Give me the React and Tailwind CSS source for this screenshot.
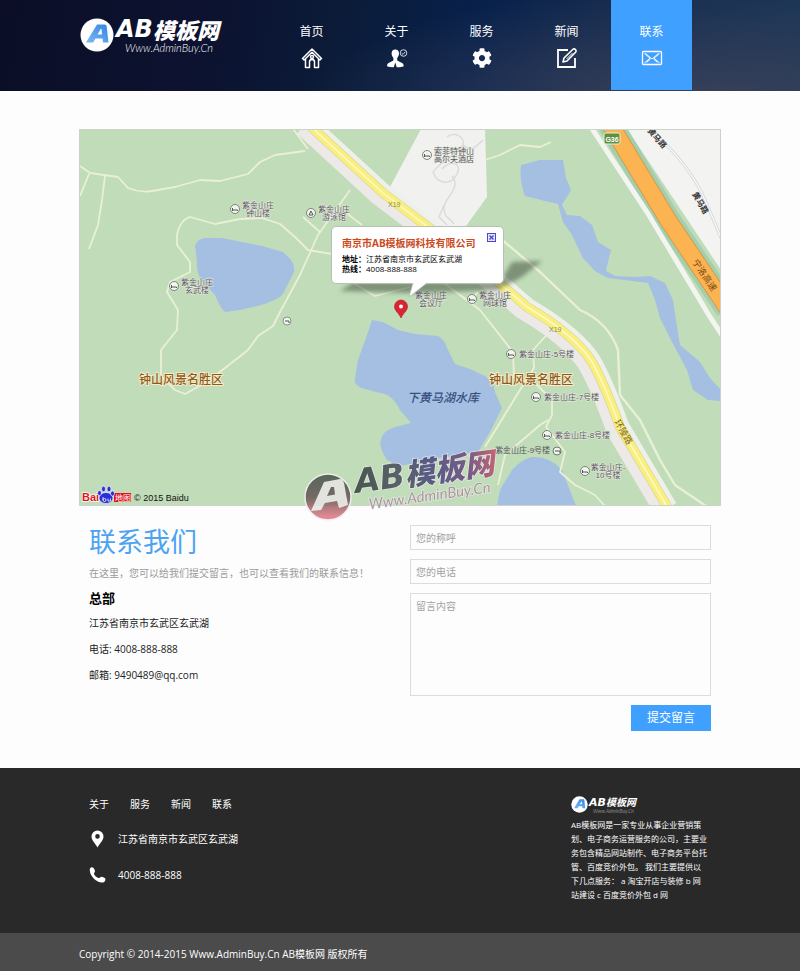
import React from "react";
import { FaCog } from "react-icons/fa";

const HomeIcon = () => (
  <svg viewBox="0 0 22 22" className="h-[22px] w-[22px]" fill="none" stroke="currentColor" strokeWidth="1.500" strokeLinejoin="round">
    <path d="M1.500 11.500 11 2l9.500 9.500-1.600 1.500L11 5.200 3.100 13z" />
    <path d="M4.500 12v8.500h4V15a2.500 2.500 0 0 1 5 0v5.500h4V12" />
    <circle cx="11" cy="10" r="1.500" />
  </svg>
);

const UserIcon = () => (
  <svg viewBox="0 0 22 22" className="h-[22px] w-[22px]" fill="currentColor">
    <path d="M9.300 2.500c2.400 0 3.700 1.600 3.700 4 0 2-.9 3.400-1.800 4.500v2.500l4.800 2.500c1.200.6 1.700 1.600 1.700 3.300-2 .8-4.500 1-7 .9L9.300 15.500l-1.500 4.700c-2.500.1-4.800-.1-6.800-.9 0-1.700.5-2.700 1.700-3.300l4.700-2.500V11C6.500 9.900 5.600 8.500 5.600 6.500c0-2.400 1.300-4 3.700-4z" />
    <circle cx="17.500" cy="6" r="3.300" fill="none" stroke="currentColor" strokeWidth=".8" />
    <path d="m15.700 6.200 1.300 1.200L19.200 4.800" fill="none" stroke="currentColor" strokeWidth=".8" />
  </svg>
);

const EditIcon = () => (
  <svg viewBox="0 0 22 22" className="h-[22px] w-[22px]" fill="none" stroke="currentColor" strokeWidth="1.800">
    <path d="M12 3H2v17h17V11" />
    <path d="M7 15 8 11l9-8.800c1.800-1 3.800 1 2.800 2.800L11 14z" strokeWidth="1.600" strokeLinejoin="round" />
    <path d="m10.500 12 6-6" strokeWidth="1" />
  </svg>
);

const MailIcon = () => (
  <svg viewBox="0 0 22 22" className="h-[22px] w-[22px]" fill="none" stroke="currentColor" strokeWidth="1.300">
    <rect x="1.500" y="4.500" width="19" height="13" rx="1" />
    <path d="m3.500 6.500 5.500 4.700L3.500 15.800M18.500 6.500 13 11.200l5.500 4.600M4.500 6.500 11 12l6.500-5.500M5.500 15.500l4-3.500M16.500 15.500l-4-3.500" strokeWidth="1" />
  </svg>
);

const PinIcon = () => (
  <svg viewBox="0 0 18 20" className="h-[20px] w-[18px]" fill="currentColor" aria-hidden="true">
    <path fillRule="evenodd" d="M8.500 1.500a6 6 0 0 1 6 6c0 4-4 7-6 11-2-4-6-7-6-11a6 6 0 0 1 6-6zm0 3.600a2.300 2.300 0 1 0 0 4.600 2.300 2.300 0 0 0 0-4.600z" />
  </svg>
);

const PhoneIcon = () => (
  <svg viewBox="0 0 18 20" className="h-[20px] w-[18px]" fill="currentColor" aria-hidden="true">
    <path d="M1 3.500C1.800 2 3.500 1.800 4.500 3c.8 1 1.500 2.300 1.500 3.200 0 .9-1 1.400-1 2.200 0 1.600 3.200 4.600 5 4.600 1 0 1.200-1.300 2.300-1.300 1.200 0 3 .8 3.700 1.600.8 1 .3 2.900-1.300 3.900C9.500 19.500-.8 10.500 1 3.500z" />
  </svg>
);

const NAV = [
  { label: "首页", icon: <HomeIcon /> },
  { label: "关于", icon: <UserIcon /> },
  { label: "服务", icon: <FaCog className="h-[20px] w-[20px]" /> },
  { label: "新闻", icon: <EditIcon /> },
  { label: "联系", icon: <MailIcon />, active: true },
];

function LogoMark({ className }) {
  return (
    <svg viewBox="0 0 34 34" className={className} aria-hidden="true">
      <defs>
        <linearGradient id="mark" x1="0" y1="1" x2="1" y2="0">
          <stop offset="0" stopColor="#7db9f5" />
          <stop offset="1" stopColor="#2f86e6" />
        </linearGradient>
      </defs>
      <circle cx="17" cy="17" r="16.500" fill="#fff" />
      <path fillRule="evenodd" fill="url(#mark)" d="M6 24.500 17 6.500h7.500c1.500 0 2 .8 2.200 2l1.800 16h-5.500l-.5-4h-7l-2.400 4zM17.500 16.500h4.500l-.5-5.500h-.8z" />
    </svg>
  );
}

function Header() {
  return (
    <header className="h-[91px] bg-[radial-gradient(ellipse_50%_130%_at_88%_115%,#39415a_0%,#39415a00_100%),linear-gradient(100deg,#0b0e26_0%,#0c1230_25%,#0b1b38_42%,#08214c_60%,#12294e_74%,#1b3656_100%)]">
      <div className="mx-auto flex max-w-[642px] justify-between">
        <a href="#" className="flex items-start pt-[18px] pl-px text-white">
          <LogoMark className="h-[34px] w-[34px]" />
          <span className="-mt-[3px] ml-[2px] flex flex-col italic">
            <span className="flex items-center leading-[28px] font-bold whitespace-nowrap">
              <span className="font-['DejaVu_Sans',sans-serif] text-[24px]">AB</span>
              <span className="font-['Noto_Sans_CJK_SC',sans-serif] text-[22px] font-black">模板网</span>
            </span>
            <span className="pl-[9px] font-['Lato',sans-serif] text-[11px] leading-[10px] font-light">Www.AdminBuy.Cn</span>
          </span>
        </a>
        <nav className="mr-[29px] flex gap-1">
          {NAV.map((item) => (
            <a
              key={item.label}
              href="#"
              className={
                item.active
                  ? "flex h-[90px] w-[81px] flex-col items-center bg-[#40a0ff] pt-[22px] text-white"
                  : "flex h-[90px] w-[81px] flex-col items-center pt-[22px] text-white"
              }
            >
              <span className="text-[12px] leading-[20px]">{item.label}</span>
              <span className="mt-[4px] flex h-[24px] items-center">{item.icon}</span>
            </a>
          ))}
        </nav>
      </div>
    </header>
  );
}

const POIS = [
  { x: 235, y: 209, lines: ["紫金山庄", "钟山楼"] },
  { x: 174, y: 286, lines: ["紫金山庄", "玄武楼"] },
  { x: 311, y: 213, lines: ["紫金山庄", "游泳馆"], tri: true },
  { x: 427, y: 155, lines: ["索菲特钟山", "高尔夫酒店"], shift: 4 },
  { x: 408, y: 299, lines: ["紫金山庄", "会议厅"], bare: true },
  { x: 472, y: 299, lines: ["紫金山庄", "网球馆"] },
  { x: 511, y: 354, lines: ["紫金山庄-5号楼"] },
  { x: 536, y: 397, lines: ["紫金山庄-7号楼"] },
  { x: 547, y: 435, lines: ["紫金山庄-8号楼"] },
  { x: 585, y: 471, lines: ["紫金山庄-", "10号楼"] },
];

function Poi({ x, y, lines, tri, bare, shift = 0 }) {
  return (
    <g>
      {!bare && <circle cx={x} cy={y} r="4.500" fill="#f2f5ee" stroke="#6f7a70" strokeWidth=".9" />}
      {!bare && (tri
        ? <path d={`M${x - 2} ${y + 2}h4l-2-4z`} fill="none" stroke="#555" />
        : <path d={`M${x - 2.5} ${y - 1}v3M${x - 2.5} ${y + 1}h5v1`} fill="none" stroke="#555" />)}
      {lines.map((t, i) => (
        <text
          key={t}
          x={lines.length === 1 ? x + 8 : x + 23 + shift}
          y={lines.length === 1 ? y + 3 : y - 1 + i * 8}
          textAnchor={lines.length === 1 ? "start" : "middle"}
          fontSize="8"
          fill="#5a5560"
          stroke="#e6ecdf"
          strokeWidth="1"
          paintOrder="stroke"
        >
          {t}
        </text>
      ))}
    </g>
  );
}

function MapCanvas() {
  const mainRoad = "M308 124 383 193 420 221 475 262 527 307 Q575 335 592 362 Q604 383 620 427 L668 508";
  return (
    <svg viewBox="79 129 642 377" className="block w-full overflow-visible font-['Liberation_Sans','Noto_Sans_CJK_SC',sans-serif]">
      <defs>
        <clipPath id="frame"><rect x="79" y="129" width="642" height="377" /></clipPath>
        <linearGradient id="wmText" x1="0" y1="0" x2="1" y2="0">
          <stop offset="0" stopColor="#35443f" />
          <stop offset=".3" stopColor="#4b4f5c" />
          <stop offset=".55" stopColor="#4c4a80" />
          <stop offset=".8" stopColor="#6d4a80" />
          <stop offset="1" stopColor="#c4566c" />
        </linearGradient>
        <linearGradient id="wmDisc" x1="0" y1="0" x2="0" y2="1">
          <stop offset="0" stopColor="#46564c" />
          <stop offset=".5" stopColor="#6b5a58" />
          <stop offset="1" stopColor="#ee7f88" />
        </linearGradient>
        <filter id="soft"><feGaussianBlur stdDeviation="2" /></filter>
      </defs>
      <g clipPath="url(#frame)">
        <rect x="79" y="129" width="642" height="377" fill="#c1dcb9" />
        <path d="M627 129 721 270V129z" fill="#f3f3f1" />
        <path d="M421 129H485L487 197 466 226H436L390 187z" fill="#f1f2ef" />
        <path d="M447 137c8-6 18 0 16 8s-18 12-30 27c4 12 18 14 24 2s-8-14-15-5M452 176c10 12-8 22-8 32s6 10 10 16M463 145c10 8 14 0 20-5M444 205l-5 12 8 8" fill="none" stroke="#d9d9d9" strokeWidth="1.300" />

        <g fill="#a5bfe3">
          <path d="M195 246Q198 238 206 238L222 238 262 246 283 252Q296 262 294 272L284 292Q280 302 240 310L226 312Q222 312 215 295L201 280Q196 270 197 262z" />
          <path d="M372 320 383 322 398 330 415 334 438 336Q445 340 447 348L455 364 470 369 485 376Q494 382 495 392L502 408 490 432 478 452 440 458 400 466 387 460Q378 446 381 439 384 430 395 427L411 423 400 410Q392 394 380 393L365 389Q353 386 355 378L358 360 367 335z" />
          <path d="M497 506 500 490 512 470Q522 459 532 457 550 456 562 470L576 506z" />
          <path d="M521 165 540 160 563 160 566 178 571 190 562 205 567 215 580 216 592 225 598 242 611 250 608 262 606 271 615 276 635 277 650 276 665 283 673 300 676 320 680 345 700 362 710 378 721 390V401L708 400 693 390 687 370 672 342 660 318 655 300 648 283 632 281 608 278 595 271 583 258 572 235 563 222 558 204 545 201 525 196Q519 180 521 165z" />
        </g>

        <g fill="none" stroke="#eaf0d6" strokeWidth="1.800" strokeLinejoin="round">
          <path d="M80 166 90 173 118 177 128 188Q140 193 152 191L175 187 200 180 220 181 248 174 260 162 275 155 305 151" />
          <path d="M89 174 80 196M105 176 102 200 98 225 89 249" />
          <path d="M332 254 308 250 295 237 280 224 262 218 240 219 215 224 190 217Q180 220 177 235V245L190 262V272L170 282 167 292 178 310 177 330 161 350V376L175 390 185 394 205 383 225 368 248 350 258 336 273 326 280 312 300 275 318 235 350 190" />
          <path d="M303 217 320 232M345 212 362 225M293 129 308 149M340 275 375 296 410 287" />
          <path d="M444 283 480 310 513 352 514 378M470 300 478 292M485 447 520 390 534 368 533 350 553 328" />
          <path d="M498 485 505 455 540 425 548 420M534 382 552 400V415L546 427 565 452 560 472 575 485 595 495 605 506" />
          <path d="M485 160 500 155 520 145 540 147 551 142" />
          <path d="M500 238 540 272 580 310Q608 322 618 350L620 395 640 420 660 460 675 485 706 506" strokeWidth="2.400" />
        </g>

        <path d={mainRoad} transform="translate(-6 4)" fill="none" stroke="#ece9e6" strokeWidth="15" />
        <path d={mainRoad} transform="translate(3 -2)" fill="none" stroke="#eef0ea" strokeWidth="12" />
        <path d={mainRoad} fill="none" stroke="#dcd6a0" strokeWidth="10" />
        <path d={mainRoad} fill="none" stroke="#f9ef7c" strokeWidth="8.500" />
        <path d={mainRoad} fill="none" stroke="#fdf9cc" strokeWidth="1.500" />

        <path d="M610 124 668 220 728 309" fill="none" stroke="#a4cfae" strokeWidth="25" />
        <path d="M610 124 668 220 728 309" fill="none" stroke="#d59a4b" strokeWidth="18" />
        <path d="M610 124 668 220 728 309" fill="none" stroke="#fcb452" strokeWidth="16" />
        <path d="M589 124 647 212 710 317 724 338" fill="none" stroke="#f4f5f0" strokeWidth="5" />
        <path d="M650 129Q690 165 705 200T724 245" fill="none" stroke="#d2d2d2" strokeWidth="3" />
        <path d="M650 129Q690 165 705 200T724 245" fill="none" stroke="#f8f8f8" strokeWidth="1.500" />

        <g fontSize="8" fontWeight="700" fill="#333">
          <text transform="translate(647 131) rotate(48)">黄马路</text>
          <text transform="translate(692 194) rotate(60)">黄马路</text>
        </g>
        <text transform="translate(692 262) rotate(56)" fontSize="9" fill="#7a4a12">宁洛高速</text>
        <text transform="translate(614 422) rotate(60)" fontSize="9" fill="#7d6510">环陵路</text>
        <rect x="604" y="133" width="16" height="11" rx="2" fill="#5f8f3f" stroke="#e4f0d0" />
        <text x="612" y="142" fontSize="7" fontWeight="700" fill="#fff" textAnchor="middle">G36</text>
        <text x="388" y="207" fontSize="7" fill="#8a8a55">X19</text>
        <text x="549" y="332" fontSize="7" fill="#8a8a55">X19</text>

        {POIS.map((p) => <Poi key={p.x} {...p} />)}
        <text x="495" y="453" fontSize="8" fill="#5a5560">紫金山庄-9号楼</text>
        <circle cx="557" cy="451" r="4" fill="#f2f5ee" stroke="#6f7a70" />
        <path d="M555 451h5v2" fill="none" stroke="#555" />
        <circle cx="287" cy="321" r="4" fill="#f2f5ee" stroke="#8a9488" />
        <path d="M285 321h4v2" fill="none" stroke="#555" />

        <g fontSize="12" fontWeight="500" fill="#8d5a1c" stroke="#f8ecc8" strokeWidth="1.800" paintOrder="stroke">
          <text x="139" y="384">钟山风景名胜区</text>
          <text x="489" y="384">钟山风景名胜区</text>
        </g>
        <text x="407" y="402" fontSize="12" fontWeight="500" fontStyle="italic" fill="#35507f">下黄马湖水库</text>

        <path d="M340 291 354 282H500L512 262 542 261 522 277 498 290 415 293z" fill="#3a4a38" opacity=".5" filter="url(#soft)" />
        <path d="M401 318c-2-5-6.500-7-6.500-11.500a6.500 6.500 0 0 1 13 0c0 4.500-4.500 6.500-6.500 11.500z" fill="#dc2430" stroke="#b3141f" strokeWidth=".6" />
        <circle cx="401" cy="306.500" r="2" fill="#fff" />

        <text x="82" y="501" fontSize="11" fontWeight="700" fill="#e1141e" stroke="#fff" strokeWidth="1.500" paintOrder="stroke">Bai</text>
        <rect x="114" y="493" width="17" height="9" fill="#e1141e" />
        <text x="115" y="501" fontSize="8" fill="#fff">地图</text>
        <g fill="#2b2fd8" stroke="#fff" strokeWidth=".6">
          <ellipse cx="106" cy="498" rx="7" ry="5.500" />
          <ellipse cx="99.500" cy="493" rx="2" ry="2.600" />
          <ellipse cx="103.500" cy="489" rx="2" ry="2.800" />
          <ellipse cx="109" cy="489" rx="2" ry="2.800" />
          <ellipse cx="112.500" cy="493.500" rx="2" ry="2.600" />
        </g>
        <path d="M103 497v3a1.500 1.500 0 0 0 3 0 1.500 1.500 0 0 0-3 0M108 498.500v2.500h2.500v-2.500" fill="none" stroke="#fff" strokeWidth=".8" />
        <text x="134" y="501" fontSize="9" fill="#111">© 2015 Baidu</text>
      </g>
      <rect x="79.500" y="129.500" width="641" height="376" fill="none" stroke="#ccd3c8" />

      <g opacity=".88">
        <circle cx="328" cy="497" r="23" fill="url(#wmDisc)" stroke="#f0f0f0" strokeWidth="1.500" />
        <path fillRule="evenodd" fill="#e6e6e2" d="M311 511 324 482 340 479Q343 479 344 483L348 505 339 508 337 501 325 503 321 510zM327 496 335 494.500 334 487H331z" />
        <g transform="translate(356 493) rotate(-8)" stroke="#ecebea" strokeWidth="1.500" paintOrder="stroke" fontStyle="italic">
          <text fontSize="30" fontWeight="900" fill="url(#wmText)">
            <tspan className="font-['DejaVu_Sans',sans-serif]" fontSize="33" fontWeight="700">AB</tspan>
            <tspan>模板网</tspan>
          </text>
          <text x="11" y="18" fontSize="15" fill="#a58f98" className="font-['Lato',sans-serif]">Www.AdminBuy.Cn</text>
        </g>
      </g>
    </svg>
  );
}

function MapSection() {
  return (
    <section className="relative" aria-label="地图">
      <MapCanvas />
      <div className="absolute top-[97px] left-[252px] h-[58px] w-[173px] rounded-[5px] border border-[#b8c0b4] bg-white px-[10px] pt-[9px] text-black">
        <h2 className="text-[10px] leading-[15px] font-bold whitespace-nowrap text-[#cc4a1e]">南京市AB模板网科技有限公司</h2>
        <p className="mt-[3px] text-[8px] leading-[10px] whitespace-nowrap"><b>地址：</b>江苏省南京市玄武区玄武湖</p>
        <p className="text-[8px] leading-[10px] whitespace-nowrap"><b>热线：</b>4008-888-888</p>
        <button type="button" aria-label="关闭" className="absolute top-[6px] right-[7px] h-[9px] w-[9px]">
          <svg viewBox="0 0 9 9" className="block h-[9px] w-[9px]" fill="#e4e4ff" stroke="#4a48c8">
            <rect x=".5" y=".5" width="8" height="8" />
            <path d="m2.500 2.500 4 4M6.500 2.500l-4 4" strokeWidth="1.400" />
          </svg>
        </button>
        <svg viewBox="0 0 20 16" className="absolute top-[55px] left-[76px] h-[16px] w-[20px]">
          <path d="M5 1 1 15 19 1z" fill="#fff" />
          <path d="M5 1 1 15 19 1" fill="none" stroke="#b8c0b4" strokeWidth=".8" />
        </svg>
      </div>
    </section>
  );
}

const FIELD = "block w-full rounded-none border border-[#dcdcdc] bg-transparent px-[5px] text-[10px] text-[#333] outline-none placeholder:text-[#a2a2a2]";

function Contact() {
  return (
    <section className="grid grid-cols-2 gap-x-5 px-[10px] pt-[19px] pb-[37px]">
      <div className="text-[10px] text-[#222]">
        <h1 className="text-[27px] leading-[34px] font-normal text-[#4ba3f2]">联系我们</h1>
        <p className="mt-[4px] leading-[20px] whitespace-nowrap text-[#9a9a9a]">在这里，您可以给我们提交留言，也可以查看我们的联系信息！</p>
        <h2 className="mt-[3px] text-[13px] leading-[24px] font-bold text-black">总部</h2>
        <p className="leading-[26px]">江苏省南京市玄武区玄武湖</p>
        <p className="leading-[26px]">电话: 4008-888-888</p>
        <p className="leading-[26px]">邮箱: 9490489@qq.com</p>
      </div>
      <form className="flex flex-col gap-[9px]" onSubmit={(e) => e.preventDefault()}>
        <input aria-label="您的称呼" placeholder="您的称呼" className={`${FIELD} h-[25px]`} />
        <input aria-label="您的电话" placeholder="您的电话" className={`${FIELD} h-[25px]`} />
        <textarea aria-label="留言内容" placeholder="留言内容" className={`${FIELD} h-[103px] resize-none pt-[5px] leading-[14px]`} />
        <button type="submit" className="h-[26px] w-[80px] self-end bg-[#40a0ff] text-[12px] text-white">提交留言</button>
      </form>
    </section>
  );
}

const ABOUT = [
  "AB模板网是一家专业从事企业营销策",
  "划、电子商务运营服务的公司，主要业",
  "务包含精品网站制作、电子商务平台托",
  "管、百度竞价外包。 我们主要提供以",
  "下几点服务： a 淘宝开店与装修 b 网",
  "站建设 c 百度竞价外包 d 网",
].join("\n");

function Footer() {
  return (
    <footer className="text-white">
      <div className="bg-[#292929]">
        <div className="mx-auto flex max-w-[642px] justify-between px-[10px] pt-[26px] pb-[29px] text-[10px]">
          <div>
            <nav className="flex gap-[21px] leading-[20px]">
              {["关于", "服务", "新闻", "联系"].map((t) => <a key={t} href="#">{t}</a>)}
            </nav>
            <p className="mt-[15px] flex h-[20px] items-center gap-[11px]">
              <PinIcon />
              江苏省南京市玄武区玄武湖
            </p>
            <p className="mt-[16px] flex h-[20px] items-center gap-[11px]">
              <PhoneIcon />
              4008-888-888
            </p>
          </div>
          <div className="h-[110px] w-[140px]">
            <a href="#" className="flex items-center gap-px pt-[2px]">
              <LogoMark className="h-[17px] w-[17px]" />
              <span className="flex flex-col italic">
                <span className="flex items-center leading-[13px] font-bold whitespace-nowrap">
                  <span className="font-['DejaVu_Sans',sans-serif] text-[11px]">AB</span>
                  <span className="text-[10px]">模板网</span>
                </span>
                <span className="pl-[4px] font-['Lato',sans-serif] text-[5px] leading-[4px] text-[#8a8a8a]">Www.AdminBuy.Cn</span>
              </span>
            </a>
            <p className="mt-[5px] text-[8px] leading-[14px] whitespace-pre">{ABOUT}</p>
          </div>
        </div>
      </div>
      <div className="bg-[#4b4b4b]">
        <p className="mx-auto max-w-[642px] pt-[11px] pb-[7px] text-[10px] leading-[20px]">
          Copyright © 2014-2015 Www.AdminBuy.Cn AB模板网 版权所有
        </p>
      </div>
    </footer>
  );
}

export default function App() {
  return (
    <div className="bg-[#fdfdfd] font-['Open_Sans','Noto_Sans_CJK_SC',sans-serif]">
      <Header />
      <main className="mx-auto max-w-[642px] pt-[38px]">
        <MapSection />
        <Contact />
      </main>
      <Footer />
    </div>
  );
}
